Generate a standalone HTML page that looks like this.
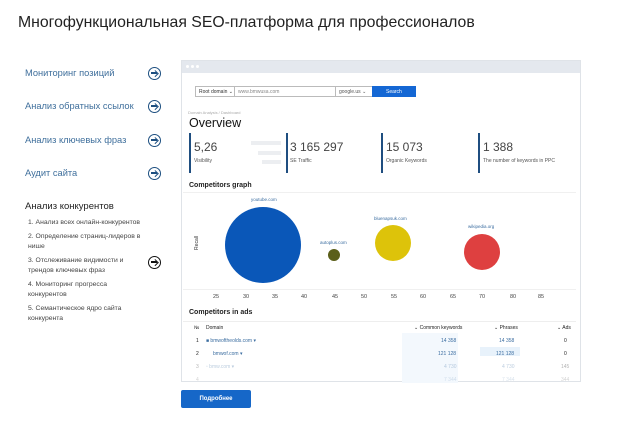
<!DOCTYPE html>
<html><head><meta charset="utf-8"><style>
*{margin:0;padding:0;box-sizing:border-box}
body{width:620px;height:423px;background:#fff;font-family:"Liberation Sans",sans-serif;position:relative;overflow:hidden}
.a{position:absolute;white-space:nowrap}
.menu{font-size:9.3px;color:#3f6f9c}
.arr{position:absolute;width:13px;height:13px;border:1.6px solid #1d4f80;border-radius:50%}
.arr:after{content:"";position:absolute;left:2px;top:4.3px;width:6px;height:1.5px;background:currentColor}
.arr:before{content:"";position:absolute;left:4px;top:2.5px;width:3.5px;height:3.5px;border-top:1.5px solid currentColor;border-right:1.5px solid currentColor;transform:rotate(45deg)}
.li{font-size:6.8px;color:#444;line-height:10px;width:112px;white-space:normal}
.num{font-size:12px;color:#444}
.lab{font-size:5px;color:#555}
.bar{position:absolute;width:1.5px;background:#1f4e80}
.ax{font-size:5.5px;color:#444}
.th{font-size:5px;color:#222}
.td{font-size:5px;color:#3b6da0}
</style></head><body>
<div class="a" style="left:18px;top:14px;font-size:15.8px;color:#222">Многофункциональная SEO-платформа для профессионалов</div>

<div class="a menu" style="left:25px;top:68px">Мониторинг позиций</div>
<div class="a menu" style="left:25px;top:101px">Анализ обратных ссылок</div>
<div class="a menu" style="left:25px;top:135px">Анализ ключевых фраз</div>
<div class="a menu" style="left:25px;top:168px">Аудит сайта</div>
<div class="arr" style="left:148px;top:67px;color:#1d4f80"></div>
<div class="arr" style="left:148px;top:100px;color:#1d4f80"></div>
<div class="arr" style="left:148px;top:134px;color:#1d4f80"></div>
<div class="arr" style="left:148px;top:167px;color:#1d4f80"></div>
<div class="a" style="left:25px;top:201px;font-size:9.5px;color:#222">Анализ конкурентов</div>
<div class="a li" style="left:28px;top:218px;width:130px">1. Анализ всех онлайн-конкурентов</div>
<div class="a li" style="left:28px;top:232px;width:115px">2. Определение страниц-лидеров в нише</div>
<div class="a li" style="left:28px;top:256px">3. Отслеживание видимости и трендов ключевых фраз</div>
<div class="a li" style="left:28px;top:280px;width:100px">4. Мониторинг прогресса конкурентов</div>
<div class="a li" style="left:28px;top:304px;width:108px">5. Семантическое ядро сайта конкурента</div>
<div class="arr" style="left:148px;top:256px;border-color:#111;color:#111"></div>

<div class="a" style="left:181px;top:60px;width:400px;height:322px;border:1px solid #dfe3e8;background:#fff">
 <div style="height:12px;background:#e4e8ee"></div>
 <div class="a" style="left:4px;top:4px;width:3px;height:3px;border-radius:50%;background:#fff"></div>
 <div class="a" style="left:9px;top:4px;width:3px;height:3px;border-radius:50%;background:#fff"></div>
 <div class="a" style="left:14px;top:4px;width:3px;height:3px;border-radius:50%;background:#fff"></div>
</div>
<div class="a" style="left:195px;top:86px;width:40px;height:11px;border:1px solid #bbb;font-size:5px;padding:2px 3px;color:#333">Root domain ⌄</div>
<div class="a" style="left:234px;top:86px;width:102px;height:11px;border:1px solid #bbb;font-size:5px;padding:2px 3px;color:#888">www.bmwusa.com</div>
<div class="a" style="left:335px;top:86px;width:38px;height:11px;border:1px solid #bbb;font-size:5px;padding:2px 3px;color:#555">google.us ⌄</div>
<div class="a" style="left:372px;top:86px;width:44px;height:11px;background:#1467d4;font-size:5px;padding:3px 14px;color:#fff">Search</div>
<div class="a" style="left:188px;top:110px;font-size:4px;color:#aaa">Domain Analysis / Dashboard</div>
<div class="a" style="left:189px;top:116px;font-size:12.5px;color:#111">Overview</div>

<div class="bar" style="left:189px;top:133px;height:40px"></div>
<div class="bar" style="left:286px;top:133px;height:40px"></div>
<div class="bar" style="left:381px;top:133px;height:40px"></div>
<div class="bar" style="left:478px;top:133px;height:40px"></div>
<div class="a num" style="left:194px;top:140px">5,26</div>
<div class="a lab" style="left:194px;top:158px">Visibility</div>
<div class="a" style="left:251px;top:141px;width:30px;height:4px;background:#eceef1"></div>
<div class="a" style="left:258px;top:151px;width:23px;height:4px;background:#eceef1"></div>
<div class="a" style="left:262px;top:160px;width:19px;height:4px;background:#eceef1"></div>
<div class="a num" style="left:290px;top:140px">3 165 297</div>
<div class="a lab" style="left:290px;top:158px">SE Traffic</div>
<div class="a num" style="left:386px;top:140px">15 073</div>
<div class="a lab" style="left:386px;top:158px">Organic Keywords</div>
<div class="a num" style="left:483px;top:140px">1 388</div>
<div class="a lab" style="left:483px;top:158px">The number of keywords in PPC</div>

<div class="a" style="left:189px;top:182px;font-size:7px;font-weight:bold;color:#222">Competitors graph</div>
<div class="a" style="left:183px;top:192px;width:393px;height:98px;border-top:1px solid #f0f0f0;border-bottom:1px solid #f0f0f0"></div>
<div class="a" style="left:190px;top:240px;font-size:5px;transform:rotate(-90deg);color:#333">Recall</div>
<div class="a" style="left:225px;top:207px;width:76px;height:76px;border-radius:50%;background:#0a57b8"></div>
<div class="a" style="left:328px;top:249px;width:12px;height:12px;border-radius:50%;background:#5b5f1a"></div>
<div class="a" style="left:375px;top:225px;width:36px;height:36px;border-radius:50%;background:#ddc30a"></div>
<div class="a" style="left:464px;top:234px;width:36px;height:36px;border-radius:50%;background:#de4040"></div>
<div class="a ax" style="left:251px;top:197px;color:#3b6da0;font-size:4.5px">youtube.com</div>
<div class="a ax" style="left:320px;top:240px;color:#3b6da0;font-size:4.5px">autoplus.com</div>
<div class="a ax" style="left:374px;top:216px;color:#3b6da0;font-size:4.5px">bluenapsuk.com</div>
<div class="a ax" style="left:468px;top:224px;color:#3b6da0;font-size:4.5px">wikipedia.org</div>
<div class="a ax" style="left:213px;top:294px">25</div><div class="a ax" style="left:243px;top:294px">30</div>
<div class="a ax" style="left:272px;top:294px">35</div><div class="a ax" style="left:301px;top:294px">40</div>
<div class="a ax" style="left:332px;top:294px">45</div><div class="a ax" style="left:361px;top:294px">50</div>
<div class="a ax" style="left:391px;top:294px">55</div><div class="a ax" style="left:420px;top:294px">60</div>
<div class="a ax" style="left:450px;top:294px">65</div><div class="a ax" style="left:479px;top:294px">70</div>
<div class="a ax" style="left:510px;top:294px">80</div><div class="a ax" style="left:538px;top:294px">85</div>

<div class="a" style="left:189px;top:309px;font-size:7px;font-weight:bold;color:#222">Competitors in ads</div>
<div class="a" style="left:183px;top:321px;width:393px;height:1px;background:#eee"></div>
<div class="a th" style="left:194px;top:325px">№</div>
<div class="a th" style="left:206px;top:325px">Domain</div>
<div class="a th" style="left:414px;top:325px">⌄ Common keywords</div>
<div class="a th" style="left:494px;top:325px">⌄ Phrases</div>
<div class="a th" style="left:557px;top:325px">⌄ Ads</div>
<div class="a" style="left:402px;top:333px;width:56px;height:50px;background:#f3f8fd"></div>
<div class="a" style="left:480px;top:347px;width:40px;height:9px;background:#e8f2fb"></div>
<div class="a th" style="left:196px;top:338px">1</div><div class="a td" style="left:206px;top:338px">■ bmwoftheolds.com ▾</div>
<div class="a td" style="left:441px;top:338px">14 358</div><div class="a td" style="left:499px;top:338px">14 358</div><div class="a th" style="left:564px;top:338px">0</div>
<div class="a th" style="left:196px;top:351px">2</div><div class="a td" style="left:213px;top:351px">bmwof.com ▾</div>
<div class="a td" style="left:438px;top:351px">121 128</div><div class="a td" style="left:496px;top:351px">121 128</div><div class="a th" style="left:564px;top:351px">0</div>
<div style="opacity:.35"><div class="a th" style="left:196px;top:364px">3</div><div class="a td" style="left:206px;top:364px">▫ bmw.com ▾</div>
<div class="a td" style="left:444px;top:364px">4 730</div><div class="a td" style="left:502px;top:364px">4 730</div><div class="a th" style="left:561px;top:364px">145</div></div>
<div style="opacity:.2"><div class="a th" style="left:196px;top:377px">4</div><div class="a td" style="left:444px;top:377px">7 344</div><div class="a td" style="left:502px;top:377px">7 344</div><div class="a th" style="left:561px;top:377px">344</div></div>
<div class="a" style="left:181px;top:390px;width:70px;height:18px;background:#1667c8;border-radius:2px;color:#fff;font-size:6px;font-weight:bold;text-align:center;line-height:18px">Подробнее</div>
</body></html>
